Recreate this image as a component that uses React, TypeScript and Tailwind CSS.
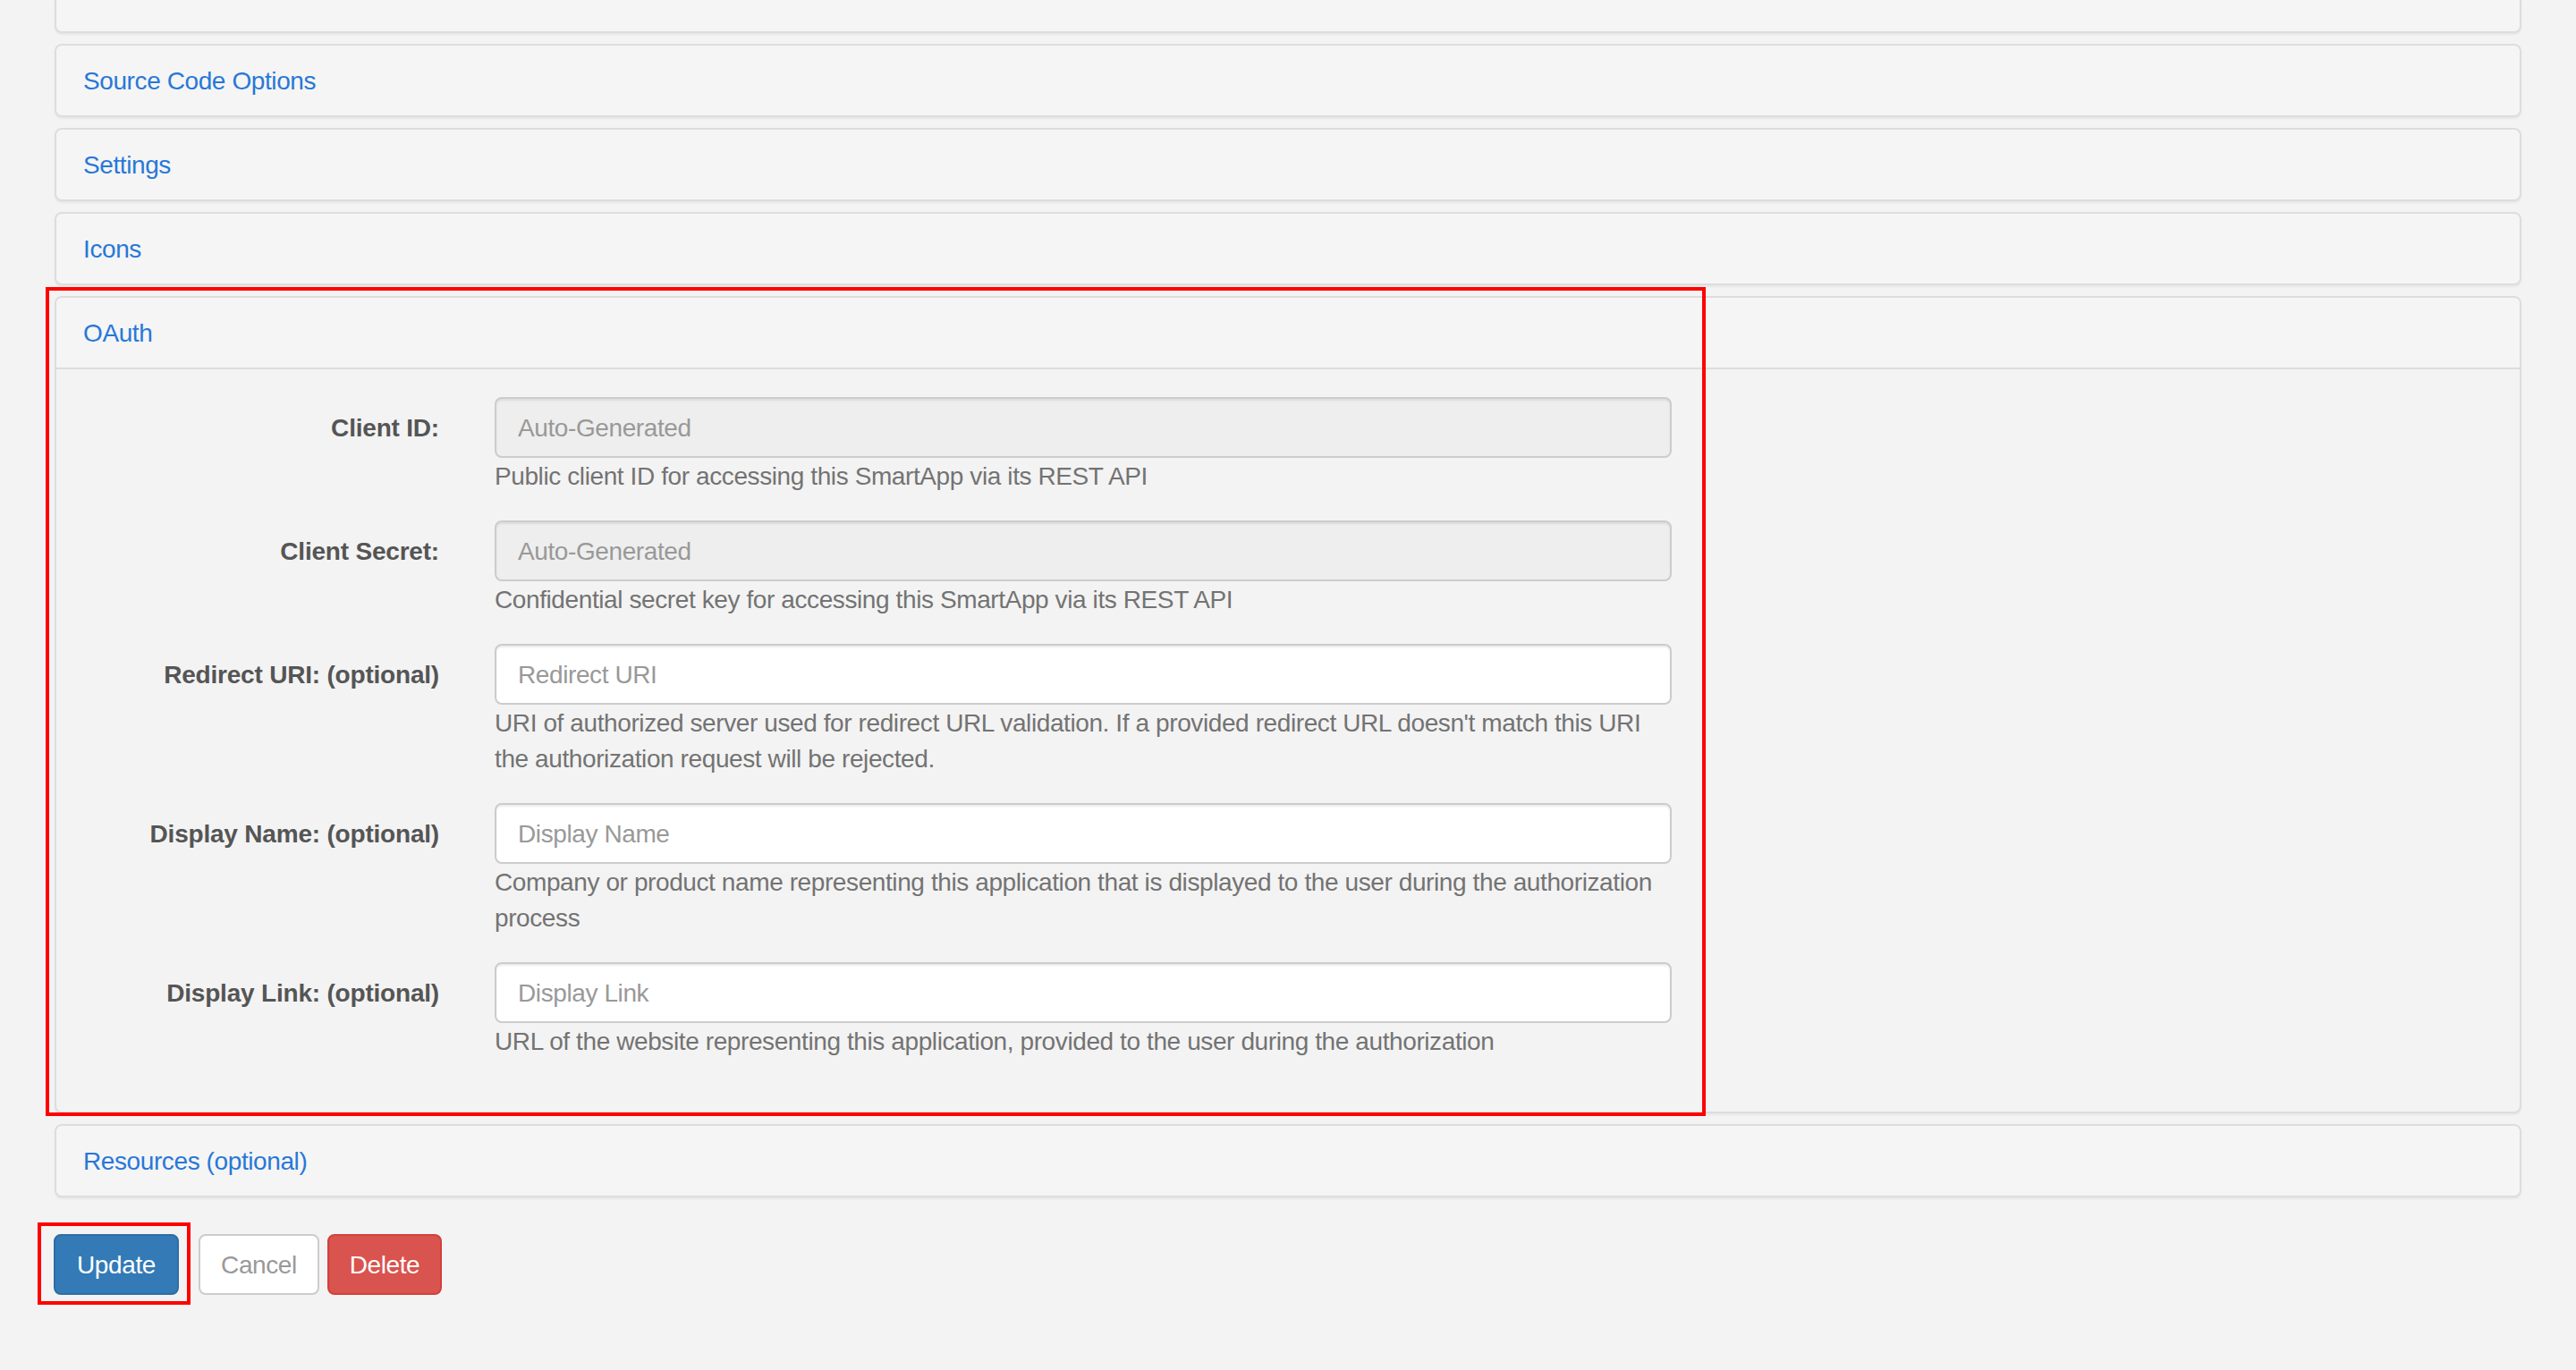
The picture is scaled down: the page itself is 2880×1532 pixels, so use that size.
import React from "react"

const font = { fontFamily: '"Liberation Sans", Arial, Helvetica, sans-serif' }

function CollapsedPanel({ title }: { title: string }) {
  return (
    <div className="rounded-[8px] border-2 border-[#dddddd] bg-[#f5f5f5] px-[30px] pb-[18px] pt-[20px] text-[28px] leading-[40px] tracking-[-0.4px] text-[#2878d7] shadow-[0_2px_2px_rgba(0,0,0,0.05)]">
      {title}
    </div>
  )
}

interface FieldProps {
  label: string
  placeholder: string
  disabled?: boolean
  help: string[]
}

function Field({ label, placeholder, disabled, help }: FieldProps) {
  return (
    <div className="mb-[29px] flex gap-[62px]">
      <label className="w-[398px] shrink-0 pt-[15px] text-right text-[28px] font-bold leading-[40px] tracking-[-0.2px] text-[#555555]">
        {label}
      </label>
      <div className="w-[1316px] shrink-0">
        <input
          type="text"
          disabled={disabled}
          placeholder={placeholder}
          className={
            "block h-[68px] w-full rounded-[8px] border-2 border-[#cccccc] px-[24px] pt-[2px] text-[28px] tracking-[-0.4px] text-[#555555] shadow-[inset_0_2px_2px_rgba(0,0,0,0.075)] outline-none placeholder:text-[#999999] " +
            (disabled ? "bg-[#eeeeee]" : "bg-white")
          }
          style={font}
        />
        <div className="pt-[1px] text-[28px] leading-[40px] tracking-[-0.4px] text-[#737373]">
          {help.map((line) => (
            <div key={line} className="whitespace-nowrap">
              {line}
            </div>
          ))}
        </div>
      </div>
    </div>
  )
}

export default function App() {
  return (
    <div className="relative min-h-[1532px] w-full bg-[#f3f3f3]" style={font}>
      <div className="flex flex-col gap-[12px] px-[61px]">
        {/* panel cut off by the top of the page */}
        <div className="h-[37px] rounded-b-[8px] border-x-2 border-b-2 border-[#dddddd] bg-[#f5f5f5] shadow-[0_2px_2px_rgba(0,0,0,0.05)]" />

        <CollapsedPanel title="Source Code Options" />
        <CollapsedPanel title="Settings" />
        <CollapsedPanel title="Icons" />

        {/* OAuth */}
        <div className="rounded-[8px] border-2 border-[#dddddd] bg-[#f3f3f3] shadow-[0_2px_2px_rgba(0,0,0,0.05)]">
          <div className="rounded-t-[6px] border-b-2 border-[#dddddd] bg-[#f5f5f5] px-[30px] pb-[18px] pt-[20px] text-[28px] leading-[40px] tracking-[-0.4px] text-[#2878d7]">
            OAuth
          </div>
          <div className="px-[30px] pb-[29px] pt-[31px]">
            <Field
              label="Client ID:"
              placeholder="Auto-Generated"
              disabled
              help={["Public client ID for accessing this SmartApp via its REST API"]}
            />
            <Field
              label="Client Secret:"
              placeholder="Auto-Generated"
              disabled
              help={["Confidential secret key for accessing this SmartApp via its REST API"]}
            />
            <Field
              label="Redirect URI: (optional)"
              placeholder="Redirect URI"
              help={[
                "URI of authorized server used for redirect URL validation. If a provided redirect URL doesn't match this URI",
                "the authorization request will be rejected.",
              ]}
            />
            <Field
              label="Display Name: (optional)"
              placeholder="Display Name"
              help={[
                "Company or product name representing this application that is displayed to the user during the authorization",
                "process",
              ]}
            />
            <Field
              label="Display Link: (optional)"
              placeholder="Display Link"
              help={["URL of the website representing this application, provided to the user during the authorization"]}
            />
          </div>
        </div>

        <CollapsedPanel title="Resources (optional)" />
      </div>

      <div className="mt-[41px] flex px-[60px] tracking-[-0.4px]">
        <button className="h-[68px] w-[140px] rounded-[8px] border-2 border-[#2e6da4] bg-[#337ab7] pt-[2px] text-[28px] text-white">
          Update
        </button>
        <button className="ml-[22px] h-[68px] w-[135px] rounded-[8px] border-2 border-[#cccccc] bg-white pt-[2px] text-[28px] text-[#999999]">
          Cancel
        </button>
        <button className="ml-[9px] h-[68px] w-[128px] rounded-[8px] border-2 border-[#d43f3a] bg-[#d9534f] pt-[2px] text-[28px] text-white">
          Delete
        </button>
      </div>

      {/* annotation boxes */}
      <div className="pointer-events-none absolute left-[51px] top-[321px] h-[927px] w-[1856px] border-4 border-[#ff0000]" />
      <div className="pointer-events-none absolute left-[42px] top-[1367px] h-[92px] w-[171px] border-4 border-[#ff0000]" />
    </div>
  )
}
